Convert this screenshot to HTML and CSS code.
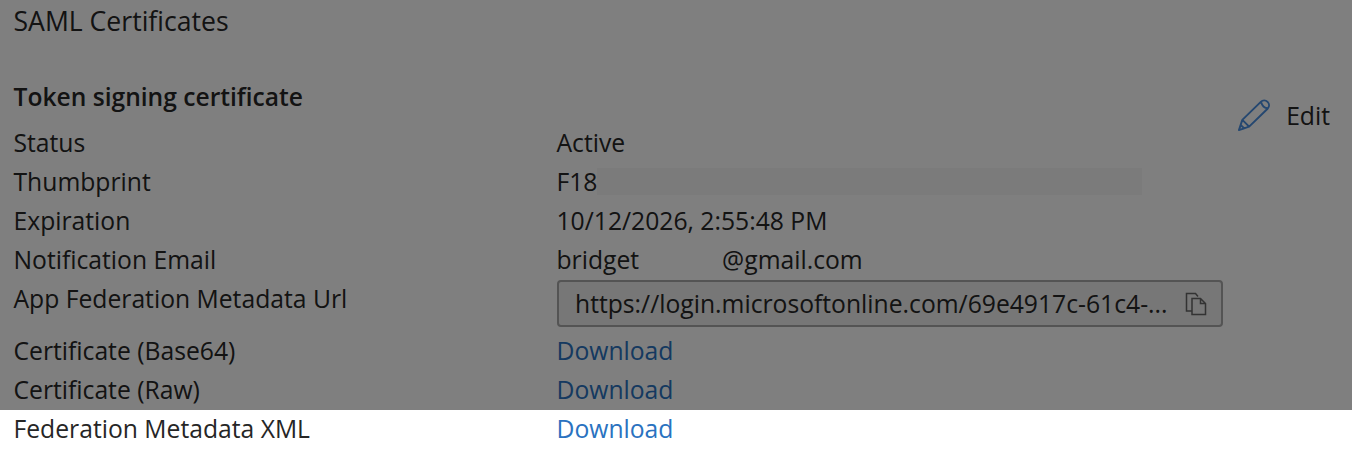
FILE: index.html
```html
<!DOCTYPE html>
<html lang="en">
<head>
<meta charset="utf-8">
<title>SAML Certificates</title>
<link rel="stylesheet" href="styles.css">
</head>
<body>
<main class="page">
  <h1 class="title">SAML Certificates</h1>
  <section class="cert">
    <div class="cert-head">
      <h2 class="subtitle">Token signing certificate</h2>
      <button class="edit" type="button">
        <svg class="pencil" viewBox="0 0 34 34" width="33" height="33" aria-hidden="true">
          <path d="M2 32 L5.500 21.500 L24.500 3 C26.500 1 29.500 1 31.500 3 C33.500 5 33.500 8 31.500 10 L12.500 28.500 Z M5.500 21.500 L12.500 28.500 M25 3.500 C26 7 28 9 31 9.500 M2 32 L7.500 30.300 L3.800 26.800 Z" fill="none" stroke="#4a8fe0" stroke-width="2" stroke-linejoin="round"/>
        </svg>
        <span>Edit</span>
      </button>
    </div>
    <dl class="rows">
      <div class="row"><dt>Status</dt><dd>Active</dd></div>
      <div class="row"><dt>Thumbprint</dt><dd class="masked">F18<span class="smudge smudge-long"></span></dd></div>
      <div class="row"><dt>Expiration</dt><dd>10/12/2026, 2:55:48 PM</dd></div>
      <div class="row"><dt>Notification Email</dt><dd class="masked">bridget<span class="smudge smudge-short"></span>@gmail.com</dd></div>
      <div class="row row-url"><dt>App Federation Metadata Url</dt><dd>
        <div class="url-box">
          <span class="url-text">https://login.microsoftonline.com/69e4917c-61c4-...</span>
          <svg class="copy" viewBox="0 0 22 24" width="22" height="24" aria-hidden="true">
            <path d="M7 19 H1.500 V1.500 H10.500 L13 4.500 M7 6.500 H15.500 L20.500 11.500 V22.500 H7 Z M15.500 6.500 V11.500 H20.500" fill="none" stroke="#666" stroke-width="1.500"/>
          </svg>
        </div>
      </dd></div>
      <div class="row"><dt>Certificate (Base64)</dt><dd><a href="#">Download</a></dd></div>
      <div class="row"><dt>Certificate (Raw)</dt><dd><a href="#">Download</a></dd></div>
      <div class="row"><dt>Federation Metadata XML</dt><dd><a href="#">Download</a></dd></div>
    </dl>
  </section>
</main>
<div class="scrim"></div>
</body>
</html>
```
FILE: styles.css
```css
* { box-sizing: border-box; }
html, body { margin: 0; height: 100%; }
body {
  position: relative;
  overflow: hidden;
  background: #fff;
  color: #262626;
  font-family: "Open Sans", "Noto Sans", sans-serif;
  font-size: 24.7px;
  line-height: 39px;
}
.page { padding: 2px 22px 0 13.5px; }
.title { margin: 0; font-size: 26.6px; font-weight: 400; line-height: 39px; }
.cert { margin-top: 36px; }
.cert-head { display: flex; justify-content: space-between; align-items: flex-start; height: 46px; }
.subtitle { margin: 0; font-size: 24.600px; font-weight: 600; line-height: 39px; }
.edit {
  display: flex; align-items: center; gap: 16px;
  margin-top: 19px; padding: 0; border: 0; background: none;
  font: inherit; color: inherit;
}
.pencil { display: block; }
.rows { margin: 0; }
.row { display: grid; grid-template-columns: 543px 666px; height: 39px; }
.row dt, .row dd { margin: 0; white-space: nowrap; }
.row-url { height: 52px; }
.row-url dd { padding-top: 1px; }
a { color: #2a72c0; text-decoration: none; }
.masked { display: flex; }
.smudge { display: block; height: 27px; margin-top: 6px; }
.smudge-long { width: 545px; background: #f6f6f6; }
.smudge-short { width: 83px; background: #fff; }
.url-box {
  display: flex; align-items: center; justify-content: space-between;
  width: 666px; height: 47px; padding: 0 14px 0 16.500px;
  border: 2px solid #a8a8a8; border-radius: 4px;
  background: #eee;
}
.url-text { font-size: 24.7px; white-space: nowrap; }
.copy { flex: none; }
.scrim { position: absolute; left: 0; right: 0; top: 0; height: 410px; background: rgba(0,0,0,.5); }
```
